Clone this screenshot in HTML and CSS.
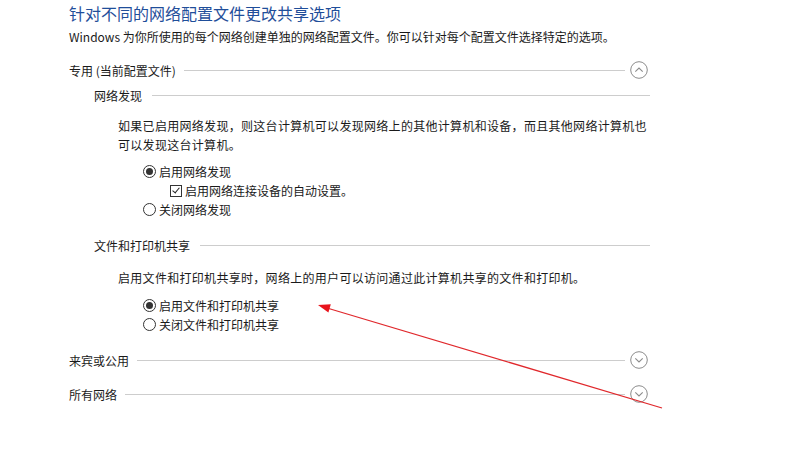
FILE: index.html
```html
<!DOCTYPE html>
<html lang="zh-CN">
<head>
    <meta charset="UTF-8">
    <title>高级共享设置</title>
    <link rel="stylesheet" href="styles.css">
</head>
<body>
    <div class="page">
        <h1 class="title">针对不同的网络配置文件更改共享选项</h1>
        <p class="intro">Windows 为你所使用的每个网络创建单独的网络配置文件。你可以针对每个配置文件选择特定的选项。</p>

        <section class="profile">
            <div class="profile-head">
                <span>专用 (当前配置文件)</span>
                <span class="rule"></span>
                <span class="toggle">
                    <svg width="18" height="18" viewBox="0 0 18 18"><circle cx="9" cy="9" r="8.3" fill="none" stroke="#8c8c8c" stroke-width="1"/><path d="M5.3 10.6 L9 7 L12.7 10.6" fill="none" stroke="#8c8c8c" stroke-width="1.1"/></svg>
                </span>
            </div>

            <div class="group">
                <div class="group-head">
                    <span>网络发现</span>
                    <span class="rule"></span>
                </div>
                <p class="note">如果已启用网络发现，则这台计算机可以发现网络上的其他计算机和设备，而且其他网络计算机也可以发现这台计算机。</p>
                <div class="options">
                    <div class="opt"><span class="radio on"></span>启用网络发现</div>
                    <div class="opt sub"><span class="check"></span>启用网络连接设备的自动设置。</div>
                    <div class="opt"><span class="radio"></span>关闭网络发现</div>
                </div>
            </div>

            <div class="group second">
                <div class="group-head">
                    <span>文件和打印机共享</span>
                    <span class="rule"></span>
                </div>
                <p class="note">启用文件和打印机共享时，网络上的用户可以访问通过此计算机共享的文件和打印机。</p>
                <div class="options">
                    <div class="opt"><span class="radio on"></span>启用文件和打印机共享</div>
                    <div class="opt"><span class="radio"></span>关闭文件和打印机共享</div>
                </div>
            </div>
        </section>

        <section class="profile guest">
            <div class="profile-head">
                <span>来宾或公用</span>
                <span class="rule"></span>
                <span class="toggle">
                    <svg width="18" height="18" viewBox="0 0 18 18"><circle cx="9" cy="9" r="8.3" fill="none" stroke="#8c8c8c" stroke-width="1"/><path d="M5.3 7.4 L9 11 L12.7 7.4" fill="none" stroke="#8c8c8c" stroke-width="1.1"/></svg>
                </span>
            </div>
        </section>

        <section class="profile all">
            <div class="profile-head">
                <span>所有网络</span>
                <span class="rule"></span>
                <span class="toggle">
                    <svg width="18" height="18" viewBox="0 0 18 18"><circle cx="9" cy="9" r="8.3" fill="none" stroke="#8c8c8c" stroke-width="1"/><path d="M5.3 7.4 L9 11 L12.7 7.4" fill="none" stroke="#8c8c8c" stroke-width="1.1"/></svg>
                </span>
            </div>
        </section>

        <!-- red annotation arrow drawn over the page -->
        <svg class="arrow" width="792" height="455" viewBox="0 0 792 455">
            <line x1="662" y1="408" x2="327" y2="308" stroke="#e0282c" stroke-width="1.3"/>
            <polygon points="318,305 330.8,304.2 328.4,312.4" fill="#e8141c"/>
        </svg>
    </div>
</body>
</html>
```

FILE: styles.css
```css
body {
    margin: 0;
    background: #ffffff;
    color: #1a1a1a;
    font-family: "Microsoft YaHei", "Noto Sans CJK SC", "Noto Sans", sans-serif;
    font-size: 12px;
}
.page {
    position: relative;
    width: 581px;
    height: 455px;
    padding-left: 69px;
}
.title {
    margin: 0;
    font-size: 16px;
    font-weight: 400;
    line-height: 26px;
    color: #1f4e9a;
}
.intro {
    margin: 0;
    line-height: 22px;
}
.profile {
    margin-top: 10px;
}
.profile-head, .group-head {
    display: flex;
    align-items: center;
    height: 24px;
}
.profile-head {
    padding-right: 2px;
}
.rule {
    flex: 1;
    height: 0;
    border-top: 1px solid #cdcdcd;
}
.profile-head .rule {
    margin-left: 8px;
}
.group-head .rule {
    margin-left: 10px;
}
.toggle {
    display: flex;
    margin-left: 5px;
}
.group {
    padding-left: 25px;
    margin-top: 1px;
}
.group.second {
    margin-top: 14px;
}
.note {
    margin: 9px 0 0;
    padding-left: 24px;
    width: 540px;
    line-height: 19px;
    letter-spacing: 0.3px;
}
.second .note {
    margin-top: 11px;
}
.options {
    margin-top: 8px;
    padding-left: 49px;
}
.opt {
    display: flex;
    align-items: center;
    height: 19px;
}
.opt.sub {
    padding-left: 27px;
}
.radio {
    width: 11px;
    height: 11px;
    border: 1px solid #333333;
    border-radius: 50%;
    margin-right: 3px;
    display: flex;
    align-items: center;
    justify-content: center;
}
.radio.on::after {
    content: "";
    width: 7px;
    height: 7px;
    border-radius: 50%;
    background: #333333;
}
.check {
    position: relative;
    width: 10px;
    height: 10px;
    border: 1px solid #333333;
    margin-right: 3px;
}
.check::after {
    content: "";
    position: absolute;
    left: 3px;
    top: 0px;
    width: 3px;
    height: 6px;
    border-right: 1px solid #222222;
    border-bottom: 1px solid #222222;
    transform: rotate(40deg);
}
.second .options {
    margin-top: 9px;
}
.guest {
    margin-top: 14px;
}
.all {
    margin-top: 10px;
}
.arrow {
    position: absolute;
    left: 0;
    top: 0;
    pointer-events: none;
}
```
